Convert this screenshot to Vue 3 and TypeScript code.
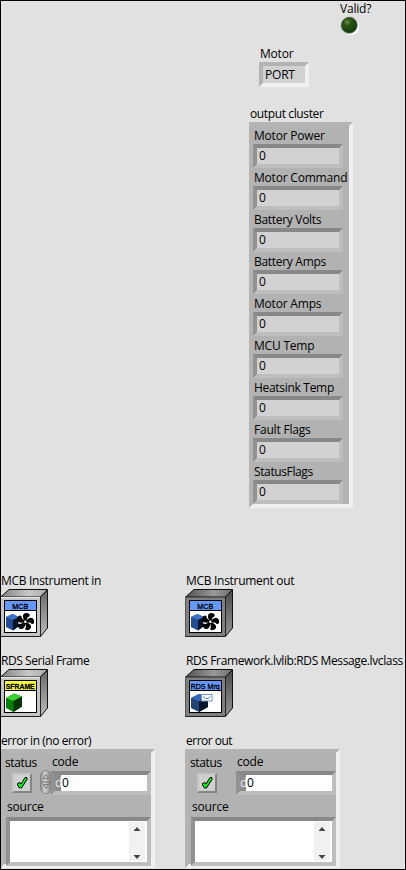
<script setup lang="ts">
interface ClassRef {
  id: string
  label: string
  caption: string
  dark: boolean
  kind: 'fan' | 'green' | 'mail'
  tracking: string
}

const readings: { name: string; value: number; tracking: string }[] = [
  { name: 'Motor Power', value: 0, tracking: '' },
  { name: 'Motor Command', value: 0, tracking: '' },
  { name: 'Battery Volts', value: 0, tracking: 'snug' },
  { name: 'Battery Amps', value: 0, tracking: 'snug' },
  { name: 'Motor Amps', value: 0, tracking: '' },
  { name: 'MCU Temp', value: 0, tracking: '' },
  { name: 'Heatsink Temp', value: 0, tracking: 'snug' },
  { name: 'Fault Flags', value: 0, tracking: '' },
  { name: 'StatusFlags', value: 0, tracking: 'tight' },
]

const refs: ClassRef[] = [
  { id: 'mi', label: 'MCB Instrument in', caption: 'MCB', dark: false, kind: 'fan', tracking: 'snug' },
  { id: 'mo', label: 'MCB Instrument out', caption: 'MCB', dark: true, kind: 'fan', tracking: 'snug' },
  { id: 'sf', label: 'RDS Serial Frame', caption: 'SFRAME', dark: false, kind: 'green', tracking: 'tighter' },
  { id: 'rm', label: 'RDS Framework.lvlib:RDS Message.lvclass', caption: 'RDS Mrq', dark: true, kind: 'mail', tracking: 'tight' },
]

const errors = [
  { label: 'error in (no error)', editable: true },
  { label: 'error out', editable: false },
]
</script>

<template>
  <main class="panel">
    <section class="valid">
      <span class="label">Valid?</span>
      <svg class="led" width="20" height="20" viewBox="0 0 20 20">
        <defs>
          <linearGradient id="rim" x1="0" y1="0" x2="1" y2="1">
            <stop offset=".2" stop-color="#aaa" />
            <stop offset=".8" stop-color="#fff" />
          </linearGradient>
          <radialGradient id="lamp" cx=".36" cy=".3" r=".72">
            <stop offset="0" stop-color="#6c8d5c" />
            <stop offset=".3" stop-color="#2b5714" />
            <stop offset="1" stop-color="#12370a" />
          </radialGradient>
        </defs>
        <circle cx="10" cy="10" r="9.5" fill="url(#rim)" />
        <circle cx="9.3" cy="9.3" r="7.8" fill="url(#lamp)" stroke="#334c2b" stroke-width=".8" />
      </svg>
    </section>

    <section class="motor">
      <span class="label">Motor</span>
      <div class="bevel motor-box">PORT</div>
    </section>

    <section class="output">
      <span class="label tight">output cluster</span>
      <div class="bevel cluster">
        <div v-for="r in readings" :key="r.name" class="reading">
          <span class="label" :class="r.tracking">{{ r.name }}</span>
          <div class="bevel field">{{ r.value }}</div>
        </div>
      </div>
    </section>

    <section class="refs">
      <div v-for="c in refs" :key="c.id" class="ref">
        <span class="label" :class="c.tracking">{{ c.label }}</span>
        <svg class="cube" width="48" height="48" viewBox="0 0 48 48">
          <defs>
            <linearGradient :id="c.id + 'top'" x1="0" x2="1">
              <stop offset="0" :stop-color="c.dark ? '#505050' : '#808080'" />
              <stop offset=".6" :stop-color="c.dark ? '#999' : '#c8c8c8'" />
              <stop offset="1" :stop-color="c.dark ? '#707070' : '#aaa'" />
            </linearGradient>
            <linearGradient :id="c.id + 'side'" x1="0" y1="0" x2="0" y2="1">
              <stop offset="0" :stop-color="c.dark ? '#4b4b4b' : '#696969'" />
              <stop offset="1" :stop-color="c.dark ? '#939393' : '#bbb'" />
            </linearGradient>
          </defs>
          <path d="M0.5 8 L9 .5 H47.5 L40.5 8z" :fill="`url(#${c.id}top)`" stroke="#111" />
          <path d="M40.5 8 L47.5 1 V39 L40.5 47.5z" :fill="`url(#${c.id}side)`" stroke="#111" />
          <path d="M0 8 H40 V48 H0z" :fill="c.dark ? '#808080' : '#c6c6c6'" />
          <path d="M0 47.5 H40.5 V8" fill="none" stroke="#222" />
          <path d="M.5 47 V8.5 H40" fill="none" :stroke="c.dark ? '#575757' : '#e8e8e8'" />
          <rect x="4.5" y="11.5" width="32" height="32" fill="#fff" stroke="#000" />
          <rect x="5" y="12" width="31" height="9" :fill="c.kind === 'green' ? '#ffff42' : '#6699ff'" />
          <path d="M5 21.5 H36" stroke="#000" />
          <text x="20.2" y="19.5" text-anchor="middle" class="caption" :class="{ heavy: c.kind === 'green' }" :textLength="c.caption === 'MCB' ? 16 : 29" lengthAdjust="spacingAndGlyphs">{{ c.caption }}</text>
          <g v-if="c.kind === 'fan'">
            <path d="M6 28 L12.5 25 L19 28 V37 L13 41.5 L6 38z" fill="#234b93" />
            <path d="M6 28 L12.5 25 L19 28 L13 31z" fill="#3e72c4" />
            <path d="M13 31 L19 28 V37 L13 41.5z" fill="#07152d" />
            <circle cx="25.5" cy="32.5" r="7.5" fill="#fff" />
            <g fill="#000">
              <path v-for="a in [10, 82, 154, 226, 298]" :key="a" d="M25 32.5 C21 29 21 24.5 25 24 C29 23.5 29.5 27 27.3 27.5 C26.3 28.5 26.5 30.5 26 32.5z" :transform="`rotate(${a} 25.3 32.8)`" />
            </g>
            <circle cx="25.3" cy="32.8" r="1.2" fill="#fff" />
          </g>
          <g v-else-if="c.kind === 'green'">
            <path d="M6 29 L14 24.5 L22 27.5 V37.5 L13.5 43 L6 39z" fill="#087d0b" />
            <path d="M6 29 L14 24.5 L22 27.5 L13.5 32z" fill="#38cf30" />
            <path d="M13.5 32 L22 27.5 V37.5 L13.5 43z" fill="#043505" />
          </g>
          <g v-else>
            <path d="M6 29 L14 25 L23 28 V38 L14 43 L6 39z" fill="#254375" />
            <path d="M6 29 L14 25 L23 28 L14 32.5z" fill="#3268b4" />
            <path d="M14 32.5 L23 28 V38 L14 43z" fill="#07152d" />
            <rect x="16.5" y="25.5" width="10.5" height="6.5" fill="#fff" stroke="#7195c5" />
            <path d="M18 27.5 L20.5 29.5 H23 L25.5 27.5" fill="none" stroke="#5385c0" />
          </g>
        </svg>
      </div>
    </section>

    <section class="errors">
      <div v-for="e in errors" :key="e.label" class="error">
        <span class="label" :class="e.editable ? 'tighter' : 'tightest'">{{ e.label }}</span>
        <div class="bevel error-box">
          <div class="error-top">
            <div class="status">
              <span class="label tight">status</span>
              <div class="check">
                <svg width="16" height="16" viewBox="0 0 16 16">
                  <path d="M3.5 8.5 L6 7.5 L7 9 L11 2.5 H13 V4.5 L7.5 13 H5.5 L3.5 10z" fill="#0bea17" stroke="#000" stroke-width="1" stroke-linejoin="round" />
                </svg>
              </div>
            </div>
            <div class="spin">
              <svg v-if="e.editable" width="12" height="24" viewBox="0 0 12 24">
                <defs>
                  <linearGradient id="knob">
                    <stop offset="0" stop-color="#858585" />
                    <stop offset=".4" stop-color="#d5d5d5" />
                    <stop offset="1" stop-color="#777" />
                  </linearGradient>
                </defs>
                <rect x=".5" y=".5" width="11" height="23" rx="5.5" fill="url(#knob)" stroke="#888" />
                <path d="M1 12 H11" stroke="#777" />
                <path d="M3.5 8.5 L6 4.5 L8.5 8.5z M3.5 14.5 L6 18.5 L8.5 14.5z" fill="#ccc" stroke="#666" stroke-width=".8" />
              </svg>
            </div>
            <div class="code">
              <span class="label">code</span>
              <div class="bevel field code-field"><span class="radix">d</span><span>0</span></div>
            </div>
          </div>
          <span class="label source-label">source</span>
          <div class="bevel field source-field">
            <div class="scroll">
              <svg width="8" height="4" viewBox="0 0 8 4"><path d="M.5 4 L4 0 L7.5 4z" fill="#444" /></svg>
              <svg width="8" height="4" viewBox="0 0 8 4"><path d="M.5 0 L4 4 L7.5 0z" fill="#444" /></svg>
            </div>
          </div>
        </div>
      </div>
    </section>
  </main>
</template>

<style>
body { margin: 0; background: #e1e1e1; }
</style>

<style scoped>
.panel {
  box-sizing: border-box;
  width: 406px;
  height: 870px;
  border: 1px solid #000;
  background: #e1e1e1;
  color: #000;
  font: 12px/16px "Open Sans", "Noto Sans", sans-serif;
  letter-spacing: -0.2px;
  overflow: hidden;
  display: flex;
  flex-direction: column;
}
svg { display: block; flex: none; }
.label { display: block; height: 16px; white-space: nowrap; }
.snug { letter-spacing: -0.3px; }
.tight { letter-spacing: -0.38px; }
.tighter { letter-spacing: -0.45px; }
.tightest { letter-spacing: -0.5px; }
.bevel {
  box-sizing: border-box;
  border: 4px solid;
  border-color: #b4b4b4 #f0f0f0 #f0f0f0 #b4b4b4;
}
.valid { margin-left: 339px; height: 45px; }
.led { margin-top: -1px; }
.motor { margin-left: 258px; height: 60px; }
.motor .label, .output > .label { padding-left: 1px; }
.motor-box { width: 50px; height: 25px; background: #d2d2d2; padding-left: 2px; line-height: 17px; }
.output { margin-left: 248px; height: 402px; }
.cluster { width: 104px; height: 386px; background: #b2b2b2; padding: 2px 0 0; }
.cluster .label { padding-left: 1px; }
.reading { height: 42px; }
.reading:last-child { height: 40px; }
.field {
  border-color: #888 #bebebe #bebebe #929292;
  width: 90px;
  height: 24px;
  background: #d2d2d2;
  padding-left: 2px;
}
.refs { margin-top: 65px; display: grid; grid-template-columns: 184px 220px; grid-auto-rows: 80px; }
.ref .label, .error > .label { padding-left: 1px; }
.ref:nth-child(odd) .label, .error:first-child > .label { padding-left: 0; }
.ref:nth-child(odd) .cube { margin-left: -1px; }
.caption { font: 7.5px "Liberation Sans", sans-serif; letter-spacing: 0; stroke: #000; stroke-width: .3px; }
.heavy { font-weight: bold; }
.errors { display: grid; grid-template-columns: 184px 220px; }
.error-box { width: 155px; height: 119px; background: #b2b2b2; padding-top: 1px; }
.error:first-child .error-box { width: 154px; border-left-width: 3px; }
.error-top { display: flex; height: 45px; }
.status { width: 36px; padding-top: 1px; }
.status .label { padding-left: 1px; }
.check {
  box-sizing: border-box;
  margin: 2px 0 0 8px;
  width: 20px;
  height: 20px;
  border: 2px solid;
  border-color: #c6c6c6 #858585 #858585 #c6c6c6;
  background: #d0d0d0;
}
.spin { width: 11px; padding-top: 16px; display: flex; }
.code { padding-top: 0; }
.code .label { padding-left: 1px; height: 17px; }
.code-field { width: 100px; display: flex; background: #fff; padding: 0; }
.radix { width: 6px; margin-right: 1px; background: #8b8b8b; color: #eee; }
.source-label { padding-left: 3px; }
.source-field { width: 145px; height: 49px; margin-left: 2px; margin-top: 2px; background: #fff; padding: 0; display: flex; justify-content: flex-end; }
.scroll { width: 16px; margin: 1px 2px 1px 0; background: #f1f1f1; display: flex; flex-direction: column; align-items: center; justify-content: space-between; box-sizing: border-box; padding: 5px 0 2px; }
</style>
